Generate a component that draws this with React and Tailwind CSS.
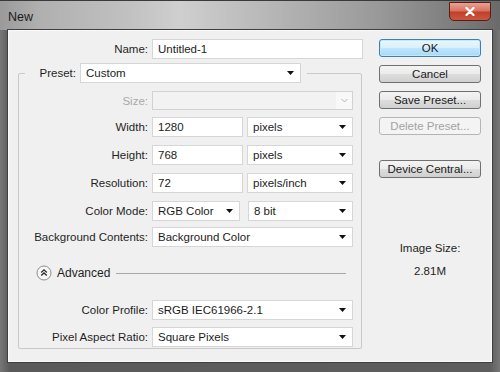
import React from "react";

const font = { fontFamily: '"Liberation Sans", Arial, sans-serif' };

function Arrow({ disabled }) {
  if (disabled) {
    return (
      <svg width="7" height="5" viewBox="0 0 7 5" className="shrink-0">
        <path d="M0.5 1 L3.5 4 L6.5 1" fill="none" stroke="#b5b5b5" strokeWidth="1" />
      </svg>
    );
  }
  return (
    <svg width="7" height="4" viewBox="0 0 7 4" className="shrink-0">
      <path d="M0 0 H7 L3.5 4 Z" fill="#111" />
    </svg>
  );
}

function Input({ value, className = "" }) {
  return (
    <div className={`h-[20px] bg-white border border-[#d6d6d6] flex items-center pl-[5px] text-[#1c1c1c] ${className}`}>
      {value}
    </div>
  );
}

function Select({ value, className = "" }) {
  return (
    <div className={`h-[20px] bg-white border border-[#d6d6d6] flex items-center pl-[5px] pr-[6px] text-[#1c1c1c] ${className}`}>
      <span className="flex-1 whitespace-nowrap overflow-hidden">{value}</span>
      <Arrow />
    </div>
  );
}

function Row({ label, children, className = "", dim }) {
  return (
    <div className={`flex items-center ${className}`}>
      <div className={`w-[133px] text-right pr-[4px] whitespace-nowrap ${dim ? "text-[#a9a9a9]" : "text-[#1f1f1f]"}`}>
        {label}
      </div>
      {children}
    </div>
  );
}

function Button({ children, primary, disabled, className = "" }) {
  let look =
    "border-[#707070] bg-[linear-gradient(180deg,#f4f4f4_0%,#ebebeb_48%,#dddddd_52%,#d0d0d0_100%)] text-[#1a1a1a]";
  if (primary)
    look =
      "border-[#3c7fb1] bg-[linear-gradient(180deg,#eaf6fd_0%,#d9f0fc_48%,#bee6fd_52%,#a7d9f5_100%)] text-[#1a1a1a] shadow-[inset_0_0_0_1px_#c6e7f8]";
  if (disabled) look = "border-[#b5b5b5] bg-[#f4f4f4] text-[#a3a3a3]";
  return (
    <div className={`w-[102px] h-[18px] rounded-[3px] border flex items-center justify-center ${look} ${className}`}>
      {children}
    </div>
  );
}

export default function App() {
  return (
    <div
      style={font}
      className="w-[500px] h-[372px] overflow-hidden flex flex-col bg-[linear-gradient(90deg,#777_0%,#5a5a5a_2%,#5e5e5e_98%,#777_100%)] text-[11.5px] leading-[14px]"
    >
      {/* title bar */}
      <div className="h-[30px] flex items-start border-t border-[#3a3a3a] bg-[linear-gradient(90deg,#9a9a9a_0%,#b0b0b0_8%,#c0c0c0_25%,#cfcfcf_36%,#b5b5b5_55%,#9a9a9a_75%,#7b7b7b_92%,#6a6a6a_100%)]">
        <div className="pl-[8px] pt-[9px] text-[12.5px] text-[#1c1c1c]">New</div>
        <div className="ml-auto mr-[9px] mt-[1px] w-[42px] h-[19px] rounded-b-[5px] border border-[#5a1d14] bg-[linear-gradient(180deg,#e9a293_0%,#d9735f_45%,#c2402a_55%,#c95840_100%)] flex items-center justify-center">
          <svg width="10" height="9" viewBox="0 0 10 9">
            <path d="M1.5 1 L8.5 8 M8.5 1 L1.5 8" stroke="#fff" strokeWidth="2.2" strokeLinecap="round" />
          </svg>
        </div>
      </div>

      {/* client panel */}
      <div className="mx-[8px] h-[332px] bg-[#f0f0f0] shadow-[0_0_0_1px_#3f3f3f,inset_0_0_0_1px_#fafafa] flex">
        {/* left */}
        <div className="w-[364px] pt-[9px]">
          <div className="flex items-center">
            <div className="w-[144px] text-right pr-[4px] text-[#1f1f1f]">Name:</div>
            <Input value="Untitled-1" className="w-[211px]" />
          </div>

          <fieldset className="mt-[4px] ml-[10px] w-[344px] pb-[1px] border border-[#c9c9c9] rounded-[2px]">
            <legend className="ml-[6px] pr-[6px] flex items-center">
              <div className="w-[55px] text-right pr-[4px] text-[#1f1f1f]">Preset:</div>
              <Select value="Custom" className="w-[221px]" />
            </legend>

            <Row label="Size:" dim className="mt-[8px]">
              <div className="w-[201px] h-[19px] border border-[#d2d2d2] bg-[#f2f2f2] flex justify-end">
                <div className="w-[16px] h-full bg-[#f8f8f8] flex items-center justify-center">
                  <Arrow disabled />
                </div>
              </div>
            </Row>
            <Row label="Width:" className="mt-[7px]">
              <Input value="1280" className="w-[91px]" />
              <Select value="pixels" className="ml-[4px] w-[106px]" />
            </Row>
            <Row label="Height:" className="mt-[8px]">
              <Input value="768" className="w-[91px]" />
              <Select value="pixels" className="ml-[4px] w-[106px]" />
            </Row>
            <Row label="Resolution:" className="mt-[8px]">
              <Input value="72" className="w-[91px]" />
              <Select value="pixels/inch" className="ml-[4px] w-[106px]" />
            </Row>
            <Row label="Color Mode:" className="mt-[8px]">
              <Select value="RGB Color" className="w-[88px]" />
              <Select value="8 bit" className="ml-[8px] w-[105px]" />
            </Row>
            <Row label="Background Contents:" className="mt-[6px]">
              <Select value="Background Color" className="w-[201px]" />
            </Row>

            <div className="mt-[18px] flex items-center h-[16px]">
              <svg width="16" height="16" viewBox="0 0 16 16" className="ml-[17px] shrink-0">
                <circle cx="8" cy="8" r="7" fill="#f7f7f7" stroke="#8d8d8d" />
                <path d="M5.2 7.4 L8 4.8 L10.8 7.4 M5.2 10.6 L8 8 L10.8 10.6" fill="none" stroke="#2a2a2a" strokeWidth="1.3" />
              </svg>
              <span className="ml-[5px] text-[#1f1f1f] text-[12px]">Advanced</span>
              <div className="flex-1 ml-[6px] mr-[15px] h-px bg-[#a8a8a8]" />
            </div>

            <Row label="Color Profile:" className="mt-[19px]">
              <Select value="sRGB IEC61966-2.1" className="w-[201px]" />
            </Row>
            <Row label="Pixel Aspect Ratio:" className="mt-[7px]">
              <Select value="Square Pixels" className="w-[201px]" />
            </Row>
          </fieldset>
        </div>

        {/* right */}
        <div className="ml-[7px] w-[102px] pt-[9px] flex flex-col">
          <Button primary>OK</Button>
          <Button className="mt-[8px]">Cancel</Button>
          <Button className="mt-[8px]">Save Preset...</Button>
          <Button disabled className="mt-[8px]">Delete Preset...</Button>
          <Button className="mt-[25px]">Device Central...</Button>
          <div className="mt-[63px] text-center text-[#1f1f1f]">Image Size:</div>
          <div className="mt-[9px] text-center text-[#1f1f1f]">2.81M</div>
        </div>
      </div>
    </div>
  );
}
